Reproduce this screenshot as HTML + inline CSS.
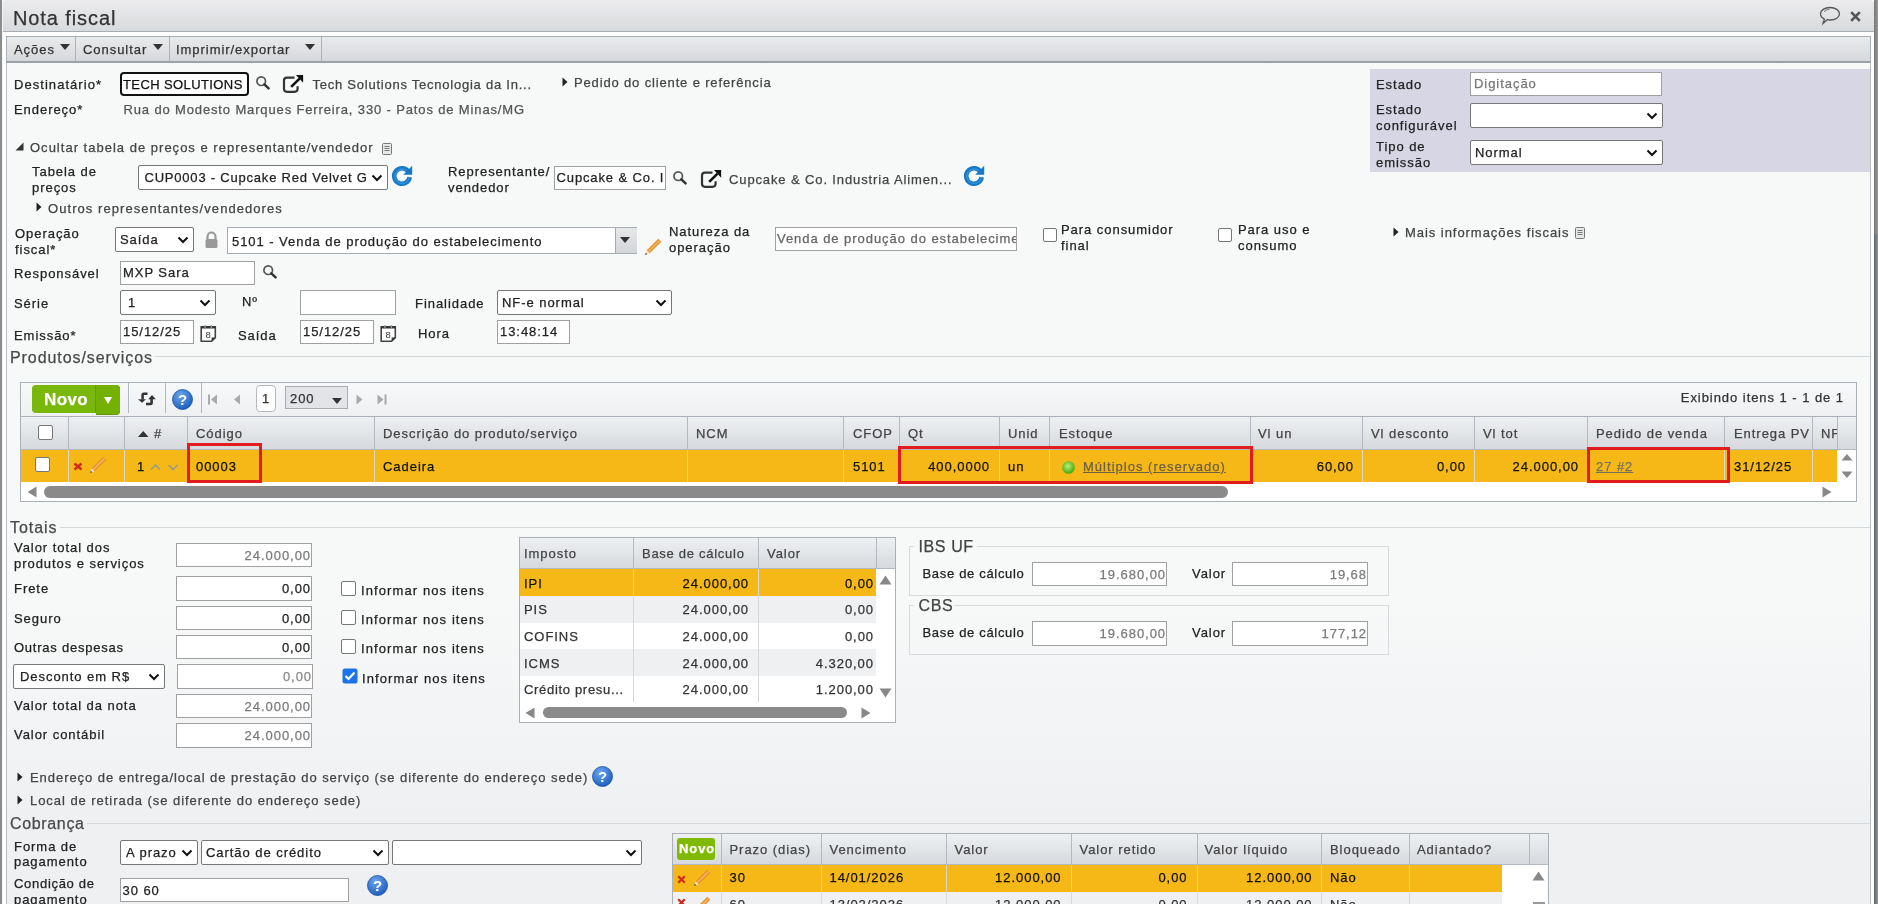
<!DOCTYPE html><html><head><meta charset="utf-8"><style>
html,body{margin:0;padding:0;width:1878px;height:904px;overflow:hidden;background:#f6f7f7;font-family:"Liberation Sans",sans-serif;}
.a{position:absolute;}
.t{position:absolute;white-space:nowrap;-webkit-text-stroke:0.25px currentColor;}
body{will-change:transform}
svg.a{overflow:visible}
</style></head><body>
<div class="a" style="left:0px;top:0px;width:1878px;height:904px;background:#fff;"></div>
<div class="a" style="left:6px;top:63px;width:1865px;height:841px;background:linear-gradient(#f7f8f8 0px,#f7f8f8 540px,#eff0f2 760px,#eff0f2 841px);border-left:1px solid #b8bdc2;border-right:1px solid #b8bdc2;box-sizing:border-box;"></div>
<div class="a" style="left:2px;top:0px;width:1872px;height:32px;background:linear-gradient(#ececee,#d8dadd);border-bottom:1px solid #a7adb4;box-sizing:border-box;border-radius:4px 4px 0 0;"></div>
<div class="a" style="left:0px;top:0px;width:2px;height:904px;background:#8b8d8d;"></div>
<div class="a" style="left:2px;top:2px;width:1px;height:902px;background:#f4f5f6;"></div>
<div class="a" style="left:1874px;top:0px;width:4px;height:234px;background:linear-gradient(90deg,#777,#999);"></div>
<div class="a" style="left:1874px;top:234px;width:4px;height:670px;background:linear-gradient(90deg,#5d666e,#8d969d);"></div>
<div class="t" style="left:13px;top:6.1px;font-size:20px;line-height:24px;color:#333;letter-spacing:0.90px;">Nota fiscal</div>
<svg class="a" style="left:1819px;top:6px" width="22" height="20" viewBox="0 0 22 20"><path d="M11 1.5 C16.5 1.5 20.5 4.3 20.5 7.8 C20.5 11.3 16.5 14 11 14 C10 14 9 13.9 8.2 13.7 L4 17.5 L5.4 13 C3 12 1.5 10 1.5 7.8 C1.5 4.3 5.5 1.5 11 1.5 Z" fill="none" stroke="#555" stroke-width="1.3"/><path d="M5 6 C6 4.5 8 3.5 10.5 3.3" fill="none" stroke="#777" stroke-width="1"/></svg>
<svg class="a" style="left:1850px;top:11px" width="11" height="11" viewBox="0 0 11 11"><path d="M1.2 1.2 L9.8 9.8 M9.8 1.2 L1.2 9.8" stroke="#555" stroke-width="2.6"/></svg>
<div class="a" style="left:6px;top:36px;width:1865px;height:27px;background:linear-gradient(#e9eaec,#d6d8db);border:1px solid #a9afb6;border-bottom:2px solid #9aa1a9;box-sizing:border-box;"></div>
<div class="a" style="left:75px;top:37px;width:1px;height:24px;background:#aeb3b9;"></div>
<div class="a" style="left:169px;top:37px;width:1px;height:24px;background:#aeb3b9;"></div>
<div class="a" style="left:321px;top:37px;width:1px;height:24px;background:#aeb3b9;"></div>
<div class="t" style="left:14px;top:41.5px;font-size:13px;line-height:16px;color:#333;letter-spacing:0.95px;">Ações</div>
<svg class="a" style="left:60px;top:44px" width="11" height="7" viewBox="0 0 11 7"><path d="M0 0 H10 L5 6 Z" fill="#333"/></svg>
<div class="t" style="left:83px;top:41.5px;font-size:13px;line-height:16px;color:#333;letter-spacing:0.95px;">Consultar</div>
<svg class="a" style="left:153px;top:44px" width="11" height="7" viewBox="0 0 11 7"><path d="M0 0 H10 L5 6 Z" fill="#333"/></svg>
<div class="t" style="left:176px;top:41.5px;font-size:13px;line-height:16px;color:#333;letter-spacing:0.95px;">Imprimir/exportar</div>
<svg class="a" style="left:305px;top:44px" width="11" height="7" viewBox="0 0 11 7"><path d="M0 0 H10 L5 6 Z" fill="#333"/></svg>
<div class="t" style="left:14px;top:76.5px;font-size:13px;line-height:16px;color:#222;letter-spacing:1.05px;">Destinatário*</div>
<div class="a" style="left:120px;top:72px;width:129px;height:24px;background:#fff;border:2px solid #111;border-radius:4px;box-sizing:border-box;"></div>
<div class="t" style="left:123px;top:76.5px;font-size:13px;line-height:16px;color:#111;letter-spacing:0.40px;">TECH SOLUTIONS</div>
<svg class="a" style="left:255px;top:75.2px" width="16" height="15" viewBox="0 0 16 15"><circle cx="6.2" cy="6.2" r="4.3" fill="none" stroke="#555" stroke-width="1.7"/><path d="M9.3 9.3 L13.6 13.3" stroke="#333" stroke-width="2.5" stroke-linecap="round"/></svg>
<svg class="a" style="left:282px;top:75px" width="22" height="19" viewBox="0 0 22 19"><path d="M12.5 2.6 H5 Q2 2.6 2 5.6 V13.8 Q2 16.8 5 16.8 H12.5 Q15.6 16.8 15.6 13.8 V11.2" fill="none" stroke="#333" stroke-width="2.2"/><path d="M9.2 11.9 L17.5 3.6" stroke="#111" stroke-width="2.6"/><path d="M14 0.1 H21.1 V7.7 Z" fill="#111"/></svg>
<div class="t" style="left:312.5px;top:76.5px;font-size:13px;line-height:16px;color:#444;letter-spacing:0.76px;">Tech Solutions Tecnologia da In...</div>
<svg class="a" style="left:562px;top:77px" width="6" height="10" viewBox="0 0 6 10"><path d="M0.5 0.5 L5.5 5 L0.5 9.5 Z" fill="#222"/></svg>
<div class="t" style="left:574px;top:74.5px;font-size:13px;line-height:16px;color:#444;letter-spacing:0.85px;">Pedido do cliente e referência</div>
<div class="t" style="left:14px;top:102.0px;font-size:13px;line-height:16px;color:#222;letter-spacing:0.95px;">Endereço*</div>
<div class="t" style="left:123.5px;top:102.0px;font-size:13px;line-height:16px;color:#555;letter-spacing:0.86px;">Rua do Modesto Marques Ferreira, 330 - Patos de Minas/MG</div>
<div class="a" style="left:1370px;top:69px;width:500px;height:103px;background:#d7d6e4;"></div>
<div class="t" style="left:1376px;top:76.5px;font-size:13px;line-height:16px;color:#222;letter-spacing:0.95px;">Estado</div>
<div class="a" style="left:1470px;top:72px;width:192px;height:24px;background:#fff;border:1px solid #a0a0a0;box-sizing:border-box;border-radius:0px;overflow:hidden;"><div class="t" style="left:3px;top:3.0px;font-size:13px;line-height:16px;color:#777;letter-spacing:0.95px">Digitação</div></div>
<div class="t" style="left:1376px;top:101.5px;font-size:13px;line-height:16px;color:#222;letter-spacing:0.95px;">Estado</div>
<div class="t" style="left:1376px;top:117.5px;font-size:13px;line-height:16px;color:#222;letter-spacing:0.95px;">configurável</div>
<div class="a" style="left:1470px;top:103px;width:193px;height:25px;background:#fff;border:1px solid #767676;border-radius:2px;box-sizing:border-box;"></div>
<div class="a" style="left:1646px;top:111.5px;width:12px;height:8px"><svg width="12" height="8" viewBox="0 0 12 8" style="display:block"><path d="M1.5 1.5 L6 6 L10.5 1.5" fill="none" stroke="#111" stroke-width="2"/></svg></div>
<div class="t" style="left:1376px;top:138.5px;font-size:13px;line-height:16px;color:#222;letter-spacing:0.95px;">Tipo de</div>
<div class="t" style="left:1376px;top:154.5px;font-size:13px;line-height:16px;color:#222;letter-spacing:0.95px;">emissão</div>
<div class="a" style="left:1470px;top:140px;width:193px;height:25px;background:#fff;border:1px solid #767676;border-radius:2px;box-sizing:border-box;"></div>
<div class="t" style="left:1475px;top:145.3px;font-size:13px;line-height:16px;color:#222;letter-spacing:0.95px;width:172px;overflow:hidden;">Normal</div>
<div class="a" style="left:1646px;top:148.5px;width:12px;height:8px"><svg width="12" height="8" viewBox="0 0 12 8" style="display:block"><path d="M1.5 1.5 L6 6 L10.5 1.5" fill="none" stroke="#111" stroke-width="2"/></svg></div>
<svg class="a" style="left:15px;top:142px" width="9" height="9" viewBox="0 0 9 9"><path d="M8.5 0.5 L8.5 8.5 L0.5 8.5 Z" fill="#333"/></svg>
<div class="t" style="left:30px;top:139.5px;font-size:13px;line-height:16px;color:#444;letter-spacing:1.01px;">Ocultar tabela de preços e representante/vendedor</div>
<svg class="a" style="left:382px;top:143px" width="10" height="12" viewBox="0 0 10 12"><rect x="0.5" y="0.5" width="9" height="11" rx="1" fill="#e8e8e8" stroke="#777"/><path d="M2.5 3.5 H7.5 M2.5 5.5 H7.5 M2.5 7.5 H7.5" stroke="#777"/></svg>
<div class="t" style="left:32px;top:163.5px;font-size:13px;line-height:16px;color:#222;letter-spacing:0.95px;">Tabela de</div>
<div class="t" style="left:32px;top:179.5px;font-size:13px;line-height:16px;color:#222;letter-spacing:0.95px;">preços</div>
<div class="a" style="left:138px;top:165px;width:250px;height:25px;background:#fff;border:1px solid #767676;border-radius:2px;box-sizing:border-box;"></div>
<div class="t" style="left:144.5px;top:170.3px;font-size:13px;line-height:16px;color:#222;letter-spacing:0.79px;width:227.5px;overflow:hidden;">CUP0003 - Cupcake Red Velvet G</div>
<div class="a" style="left:371px;top:173.5px;width:12px;height:8px"><svg width="12" height="8" viewBox="0 0 12 8" style="display:block"><path d="M1.5 1.5 L6 6 L10.5 1.5" fill="none" stroke="#111" stroke-width="2"/></svg></div>
<svg class="a" style="left:392px;top:166px" width="21" height="21" viewBox="0 0 21 21"><path d="M17.67 11.08 A7.75 7.75 0 1 1 16.4 5.6" fill="none" stroke="#1479c9" stroke-width="4.6"/><path d="M17.3 11.0 A7.2 7.2 0 1 1 14.6 4.6" fill="none" stroke="#4aa3e6" stroke-width="1.4" opacity="0.6"/><path d="M20.2 -0.2 L20.2 8.7 L11.3 8.7 Z" fill="#1479c9"/></svg>
<div class="t" style="left:448px;top:163.5px;font-size:13px;line-height:16px;color:#222;letter-spacing:0.95px;">Representante/</div>
<div class="t" style="left:448px;top:179.5px;font-size:13px;line-height:16px;color:#222;letter-spacing:0.95px;">vendedor</div>
<div class="a" style="left:554px;top:166px;width:112px;height:24px;background:#fff;border:1px solid #a0a0a0;box-sizing:border-box;border-radius:0px;overflow:hidden;"><div class="t" style="left:1.5px;top:3.0px;font-size:13px;line-height:16px;color:#222;letter-spacing:0.88px">Cupcake &amp; Co. Industria</div></div>
<svg class="a" style="left:672px;top:170.2px" width="16" height="15" viewBox="0 0 16 15"><circle cx="6.2" cy="6.2" r="4.3" fill="none" stroke="#555" stroke-width="1.7"/><path d="M9.3 9.3 L13.6 13.3" stroke="#333" stroke-width="2.5" stroke-linecap="round"/></svg>
<svg class="a" style="left:700px;top:170px" width="22" height="19" viewBox="0 0 22 19"><path d="M12.5 2.6 H5 Q2 2.6 2 5.6 V13.8 Q2 16.8 5 16.8 H12.5 Q15.6 16.8 15.6 13.8 V11.2" fill="none" stroke="#333" stroke-width="2.2"/><path d="M9.2 11.9 L17.5 3.6" stroke="#111" stroke-width="2.6"/><path d="M14 0.1 H21.1 V7.7 Z" fill="#111"/></svg>
<div class="t" style="left:729px;top:171.5px;font-size:13px;line-height:16px;color:#444;letter-spacing:0.88px;">Cupcake &amp; Co. Industria Alimen...</div>
<svg class="a" style="left:964px;top:166px" width="21" height="21" viewBox="0 0 21 21"><path d="M17.67 11.08 A7.75 7.75 0 1 1 16.4 5.6" fill="none" stroke="#1479c9" stroke-width="4.6"/><path d="M17.3 11.0 A7.2 7.2 0 1 1 14.6 4.6" fill="none" stroke="#4aa3e6" stroke-width="1.4" opacity="0.6"/><path d="M20.2 -0.2 L20.2 8.7 L11.3 8.7 Z" fill="#1479c9"/></svg>
<svg class="a" style="left:36px;top:202px" width="6" height="10" viewBox="0 0 6 10"><path d="M0.5 0.5 L5.5 5 L0.5 9.5 Z" fill="#222"/></svg>
<div class="t" style="left:48px;top:200.5px;font-size:13px;line-height:16px;color:#444;letter-spacing:1.06px;">Outros representantes/vendedores</div>
<div class="t" style="left:15px;top:225.5px;font-size:13px;line-height:16px;color:#222;letter-spacing:0.95px;">Operação</div>
<div class="t" style="left:15px;top:241.5px;font-size:13px;line-height:16px;color:#222;letter-spacing:0.95px;">fiscal*</div>
<div class="a" style="left:115px;top:227px;width:79px;height:25px;background:#fff;border:1px solid #767676;border-radius:2px;box-sizing:border-box;"></div>
<div class="t" style="left:120px;top:232.3px;font-size:13px;line-height:16px;color:#222;letter-spacing:0.95px;width:58px;overflow:hidden;">Saída</div>
<div class="a" style="left:177px;top:235.5px;width:12px;height:8px"><svg width="12" height="8" viewBox="0 0 12 8" style="display:block"><path d="M1.5 1.5 L6 6 L10.5 1.5" fill="none" stroke="#111" stroke-width="2"/></svg></div>
<svg class="a" style="left:204px;top:231px" width="15" height="18" viewBox="0 0 15 18"><path d="M3.5 8 V5.5 A4 4 0 0 1 11.5 5.5 V8" fill="none" stroke="#999" stroke-width="2.2"/><rect x="1.5" y="8" width="12" height="9" rx="1.5" fill="#999"/></svg>
<div class="a" style="left:227px;top:227px;width:410px;height:27px;background:#fff;border:1px solid #a5adb6;box-sizing:border-box;"></div>
<div class="a" style="left:615px;top:228px;width:21px;height:25px;background:linear-gradient(#e6e7e9,#d3d5d8);border-left:1px solid #aaa;"></div>
<svg class="a" style="left:620px;top:237px" width="11" height="7" viewBox="0 0 11 7"><path d="M0 0 H10 L5 6 Z" fill="#333"/></svg>
<div class="t" style="left:232px;top:233.5px;font-size:13px;line-height:16px;color:#222;letter-spacing:0.95px;">5101 - Venda de produção do estabelecimento</div>
<svg class="a" style="left:644px;top:238px" width="18" height="18" viewBox="0 0 18 18"><path d="M4.2 13.8 L15.8 2.2" stroke="#e8902a" stroke-width="4.2" stroke-linecap="butt"/><path d="M4.2 13.8 L15.8 2.2" stroke="#f7b868" stroke-width="1.4"/><path d="M1.2 16.8 L2.6 12.3 L5.7 15.4 Z" fill="#f5e3c0"/><path d="M1.2 16.8 L1.8 14.8 L3.2 16.2 Z" fill="#222"/></svg>
<div class="t" style="left:669px;top:223.5px;font-size:13px;line-height:16px;color:#222;letter-spacing:0.95px;">Natureza da</div>
<div class="t" style="left:669px;top:239.5px;font-size:13px;line-height:16px;color:#222;letter-spacing:0.95px;">operação</div>
<div class="a" style="left:775px;top:227px;width:242px;height:24px;background:#fff;border:1px solid #a0a0a0;box-sizing:border-box;border-radius:0px;overflow:hidden;"><div class="t" style="left:1px;top:3.0px;font-size:13px;line-height:16px;color:#666;letter-spacing:0.95px">Venda de produção do estabelecimento</div></div>
<div class="a" style="left:1043px;top:228px;width:12px;height:12px;border:1px solid #767676;border-radius:2px;background:#fff"></div>
<div class="t" style="left:1061px;top:221.5px;font-size:13px;line-height:16px;color:#222;letter-spacing:0.95px;">Para consumidor</div>
<div class="t" style="left:1061px;top:237.5px;font-size:13px;line-height:16px;color:#222;letter-spacing:0.95px;">final</div>
<div class="a" style="left:1218px;top:228px;width:12px;height:12px;border:1px solid #767676;border-radius:2px;background:#fff"></div>
<div class="t" style="left:1238px;top:221.5px;font-size:13px;line-height:16px;color:#222;letter-spacing:0.95px;">Para uso e</div>
<div class="t" style="left:1238px;top:237.5px;font-size:13px;line-height:16px;color:#222;letter-spacing:0.95px;">consumo</div>
<svg class="a" style="left:1393px;top:227px" width="6" height="10" viewBox="0 0 6 10"><path d="M0.5 0.5 L5.5 5 L0.5 9.5 Z" fill="#222"/></svg>
<div class="t" style="left:1405px;top:224.5px;font-size:13px;line-height:16px;color:#444;letter-spacing:0.95px;">Mais informações fiscais</div>
<svg class="a" style="left:1575px;top:227px" width="10" height="12" viewBox="0 0 10 12"><rect x="0.5" y="0.5" width="9" height="11" rx="1" fill="#e8e8e8" stroke="#777"/><path d="M2.5 3.5 H7.5 M2.5 5.5 H7.5 M2.5 7.5 H7.5" stroke="#777"/></svg>
<div class="t" style="left:14px;top:265.5px;font-size:13px;line-height:16px;color:#222;letter-spacing:0.95px;">Responsável</div>
<div class="a" style="left:120px;top:261px;width:135px;height:24px;background:#fff;border:1px solid #a0a0a0;box-sizing:border-box;border-radius:0px;overflow:hidden;"><div class="t" style="left:2px;top:3.0px;font-size:13px;line-height:16px;color:#222;letter-spacing:0.95px">MXP Sara</div></div>
<svg class="a" style="left:262px;top:264.2px" width="16" height="15" viewBox="0 0 16 15"><circle cx="6.2" cy="6.2" r="4.3" fill="none" stroke="#555" stroke-width="1.7"/><path d="M9.3 9.3 L13.6 13.3" stroke="#333" stroke-width="2.5" stroke-linecap="round"/></svg>
<div class="t" style="left:14px;top:295.5px;font-size:13px;line-height:16px;color:#222;letter-spacing:0.95px;">Série</div>
<div class="a" style="left:120px;top:290px;width:96px;height:25px;background:#fff;border:1px solid #767676;border-radius:2px;box-sizing:border-box;"></div>
<div class="t" style="left:128px;top:295.3px;font-size:13px;line-height:16px;color:#222;letter-spacing:0.95px;width:72px;overflow:hidden;">1</div>
<div class="a" style="left:199px;top:298.5px;width:12px;height:8px"><svg width="12" height="8" viewBox="0 0 12 8" style="display:block"><path d="M1.5 1.5 L6 6 L10.5 1.5" fill="none" stroke="#111" stroke-width="2"/></svg></div>
<div class="t" style="left:242px;top:293.5px;font-size:13px;line-height:16px;color:#222;letter-spacing:0.95px;">Nº</div>
<div class="a" style="left:300px;top:290px;width:96px;height:25px;background:#fff;border:1px solid #a0a0a0;box-sizing:border-box;border-radius:0px;overflow:hidden;"></div>
<div class="t" style="left:415px;top:295.5px;font-size:13px;line-height:16px;color:#222;letter-spacing:0.95px;">Finalidade</div>
<div class="a" style="left:497px;top:290px;width:175px;height:25px;background:#fff;border:1px solid #767676;border-radius:2px;box-sizing:border-box;"></div>
<div class="t" style="left:502px;top:295.3px;font-size:13px;line-height:16px;color:#222;letter-spacing:0.95px;width:154px;overflow:hidden;">NF-e normal</div>
<div class="a" style="left:655px;top:298.5px;width:12px;height:8px"><svg width="12" height="8" viewBox="0 0 12 8" style="display:block"><path d="M1.5 1.5 L6 6 L10.5 1.5" fill="none" stroke="#111" stroke-width="2"/></svg></div>
<div class="t" style="left:14px;top:327.5px;font-size:13px;line-height:16px;color:#222;letter-spacing:0.95px;">Emissão*</div>
<div class="a" style="left:120px;top:320px;width:74px;height:24px;background:#fff;border:1px solid #a0a0a0;box-sizing:border-box;border-radius:0px;overflow:hidden;"><div class="t" style="left:2px;top:3.0px;font-size:13px;line-height:16px;color:#222;letter-spacing:0.95px">15/12/25</div></div>
<svg class="a" style="left:200px;top:325px" width="17" height="17" viewBox="0 0 17 17"><path d="M1.2 1.8 H15.3 V12.6 L11.6 16.3 H1.2 Z" fill="#fff" stroke="#444" stroke-width="1.6"/><path d="M1.2 2.4 H15.3" stroke="#333" stroke-width="2.2"/><path d="M5 0 V3 M11.4 0 V3" stroke="#999" stroke-width="1.3"/><path d="M15.3 12.6 L11.6 12.6 L11.6 16.3 Z" fill="#333"/><text x="8.1" y="12.8" text-anchor="middle" font-family="Liberation Sans" font-size="9.5" fill="#333">8</text></svg>
<div class="t" style="left:238px;top:327.5px;font-size:13px;line-height:16px;color:#222;letter-spacing:0.95px;">Saída</div>
<div class="a" style="left:300px;top:320px;width:74px;height:24px;background:#fff;border:1px solid #a0a0a0;box-sizing:border-box;border-radius:0px;overflow:hidden;"><div class="t" style="left:2px;top:3.0px;font-size:13px;line-height:16px;color:#222;letter-spacing:0.95px">15/12/25</div></div>
<svg class="a" style="left:380px;top:325px" width="17" height="17" viewBox="0 0 17 17"><path d="M1.2 1.8 H15.3 V12.6 L11.6 16.3 H1.2 Z" fill="#fff" stroke="#444" stroke-width="1.6"/><path d="M1.2 2.4 H15.3" stroke="#333" stroke-width="2.2"/><path d="M5 0 V3 M11.4 0 V3" stroke="#999" stroke-width="1.3"/><path d="M15.3 12.6 L11.6 12.6 L11.6 16.3 Z" fill="#333"/><text x="8.1" y="12.8" text-anchor="middle" font-family="Liberation Sans" font-size="9.5" fill="#333">8</text></svg>
<div class="t" style="left:418px;top:325.5px;font-size:13px;line-height:16px;color:#222;letter-spacing:0.95px;">Hora</div>
<div class="a" style="left:497px;top:320px;width:73px;height:24px;background:#fff;border:1px solid #a0a0a0;box-sizing:border-box;border-radius:0px;overflow:hidden;"><div class="t" style="left:2px;top:3.0px;font-size:13px;line-height:16px;color:#222;letter-spacing:0.95px">13:48:14</div></div>
<div class="t" style="left:10px;top:347.5px;font-size:16px;line-height:20px;color:#4a4a4a;letter-spacing:0.93px;">Produtos/serviços</div>
<div class="a" style="left:155px;top:356px;width:1715px;height:1px;background:#d5d8db;"></div>
<div class="a" style="left:20px;top:382px;width:1837px;height:120px;background:#fff;border:1px solid #a9b0b8;box-sizing:border-box;"></div>
<div class="a" style="left:21px;top:383px;width:1835px;height:33px;background:linear-gradient(#f7f8f9,#eef0f1);"></div>
<div class="a" style="left:21px;top:416px;width:1835px;height:1px;background:#a9b0b8;"></div>
<div class="a" style="left:32px;top:385px;width:88px;height:28px;background:#79b70a;border-radius:4px;"></div>
<div class="a" style="left:95px;top:385px;width:1px;height:28px;background:#5e9a00;"></div>
<div class="a" style="left:96px;top:385px;width:24px;height:29px;background:#74b000;border-radius:0 4px 4px 0;box-shadow:0 1px 0 #5e9600;"></div>
<div class="t" style="left:44px;top:390.1px;font-size:17px;line-height:20px;color:#fff;letter-spacing:0.40px;font-weight:bold;">Novo</div>
<svg class="a" style="left:103px;top:396px" width="10" height="9" viewBox="0 0 10 9"><path d="M1 1 H9 L5 8 Z" fill="#fff"/></svg>
<div class="a" style="left:128px;top:383px;width:1px;height:30px;background:#b3b9c0;"></div>
<div class="a" style="left:165px;top:383px;width:1px;height:30px;background:#b3b9c0;"></div>
<div class="a" style="left:201px;top:383px;width:1px;height:30px;background:#b3b9c0;"></div>
<svg class="a" style="left:137px;top:391px" width="20" height="15" viewBox="0 0 20 15"><path d="M10.5 2.7 H6.8 Q5.6 2.7 5.6 4 V8.6" fill="none" stroke="#333" stroke-width="2.5"/><path d="M1 8.2 H9 L5 11.8 Z" fill="#333"/><path d="M9 13 H13.4 Q14.6 13 14.6 11.8 V7.5" fill="none" stroke="#333" stroke-width="2.6"/><path d="M11.2 8.2 H18.8 L15 4 Z" fill="#333"/></svg>
<svg class="a" style="left:172px;top:389px" width="21" height="21" viewBox="0 0 21 21"><defs><radialGradient id="hg172389" cx="40%" cy="30%" r="70%"><stop offset="0" stop-color="#6aa7ee"/><stop offset="1" stop-color="#1d5fc1"/></radialGradient></defs><circle cx="10.5" cy="10.5" r="10" fill="url(#hg172389)" stroke="#1a4fa0" stroke-width="0.8"/><text x="10.5" y="16" text-anchor="middle" font-family="Liberation Sans" font-weight="bold" font-size="15" fill="#fff">?</text></svg>
<svg class="a" style="left:208px;top:394px" width="10" height="11" viewBox="0 0 10 11"><rect x="0" y="0.5" width="2" height="10" fill="#aaa"/><path d="M9 0.5 V10.5 L3 5.5 Z" fill="#aaa"/></svg>
<svg class="a" style="left:233px;top:394px" width="8" height="11" viewBox="0 0 8 11"><path d="M7 0.5 V10.5 L1 5.5 Z" fill="#aaa"/></svg>
<div class="a" style="left:256px;top:385px;width:20px;height:27px;background:#fff;border:1px solid #b5b9be;border-radius:4px;box-sizing:border-box;"></div>
<div class="t" style="left:262px;top:390.5px;font-size:13px;line-height:16px;color:#333;letter-spacing:0.95px;">1</div>
<div class="a" style="left:285px;top:386px;width:63px;height:23px;background:#e3e4e7;border:1px solid #a9adb2;box-sizing:border-box;"></div>
<div class="t" style="left:290px;top:390.5px;font-size:13px;line-height:16px;color:#333;letter-spacing:0.95px;">200</div>
<svg class="a" style="left:332px;top:398px" width="10" height="6" viewBox="0 0 10 6"><path d="M0 0 H10 L5 6 Z" fill="#333"/></svg>
<svg class="a" style="left:356px;top:394px" width="8" height="11" viewBox="0 0 8 11"><path d="M0.5 0.5 V10.5 L6.5 5.5 Z" fill="#aaa"/></svg>
<svg class="a" style="left:377px;top:394px" width="10" height="11" viewBox="0 0 10 11"><path d="M0.5 0.5 V10.5 L6.5 5.5 Z" fill="#aaa"/><rect x="7.5" y="0.5" width="2" height="10" fill="#aaa"/></svg>
<div class="t" style="right:34px;top:389.5px;font-size:13px;line-height:16px;color:#333;letter-spacing:0.95px;">Exibindo itens 1 - 1 de 1</div>
<div class="a" style="left:21px;top:417px;width:1835px;height:32px;background:linear-gradient(#eef0f2,#d6d9dd);"></div>
<div class="a" style="left:21px;top:449px;width:1835px;height:1px;background:#b3b9c0;"></div>
<div class="a" style="left:68px;top:417px;width:1px;height:32px;background:#b3b9c0;"></div>
<div class="a" style="left:124px;top:417px;width:1px;height:32px;background:#b3b9c0;"></div>
<div class="a" style="left:187px;top:417px;width:1px;height:32px;background:#b3b9c0;"></div>
<div class="a" style="left:374px;top:417px;width:1px;height:32px;background:#b3b9c0;"></div>
<div class="a" style="left:687px;top:417px;width:1px;height:32px;background:#b3b9c0;"></div>
<div class="a" style="left:843px;top:417px;width:1px;height:32px;background:#b3b9c0;"></div>
<div class="a" style="left:899px;top:417px;width:1px;height:32px;background:#b3b9c0;"></div>
<div class="a" style="left:999px;top:417px;width:1px;height:32px;background:#b3b9c0;"></div>
<div class="a" style="left:1049px;top:417px;width:1px;height:32px;background:#b3b9c0;"></div>
<div class="a" style="left:1250px;top:417px;width:1px;height:32px;background:#b3b9c0;"></div>
<div class="a" style="left:1362px;top:417px;width:1px;height:32px;background:#b3b9c0;"></div>
<div class="a" style="left:1474px;top:417px;width:1px;height:32px;background:#b3b9c0;"></div>
<div class="a" style="left:1587px;top:417px;width:1px;height:32px;background:#b3b9c0;"></div>
<div class="a" style="left:1724px;top:417px;width:1px;height:32px;background:#b3b9c0;"></div>
<div class="a" style="left:1812px;top:417px;width:1px;height:32px;background:#b3b9c0;"></div>
<div class="a" style="left:1837px;top:417px;width:1px;height:32px;background:#b3b9c0;"></div>
<div class="a" style="left:21px;top:450px;width:1816px;height:32px;background:#f5b817;"></div>
<div class="a" style="left:68px;top:450px;width:1px;height:32px;background:#ddd6c2;"></div>
<div class="a" style="left:124px;top:450px;width:1px;height:32px;background:#ddd6c2;"></div>
<div class="a" style="left:187px;top:450px;width:1px;height:32px;background:#ddd6c2;"></div>
<div class="a" style="left:374px;top:450px;width:1px;height:32px;background:#ddd6c2;"></div>
<div class="a" style="left:687px;top:450px;width:1px;height:32px;background:#ddd6c2;"></div>
<div class="a" style="left:843px;top:450px;width:1px;height:32px;background:#ddd6c2;"></div>
<div class="a" style="left:899px;top:450px;width:1px;height:32px;background:#ddd6c2;"></div>
<div class="a" style="left:999px;top:450px;width:1px;height:32px;background:#ddd6c2;"></div>
<div class="a" style="left:1049px;top:450px;width:1px;height:32px;background:#ddd6c2;"></div>
<div class="a" style="left:1250px;top:450px;width:1px;height:32px;background:#ddd6c2;"></div>
<div class="a" style="left:1362px;top:450px;width:1px;height:32px;background:#ddd6c2;"></div>
<div class="a" style="left:1474px;top:450px;width:1px;height:32px;background:#ddd6c2;"></div>
<div class="a" style="left:1587px;top:450px;width:1px;height:32px;background:#ddd6c2;"></div>
<div class="a" style="left:1724px;top:450px;width:1px;height:32px;background:#ddd6c2;"></div>
<div class="a" style="left:1812px;top:450px;width:1px;height:32px;background:#ddd6c2;"></div>
<div class="a" style="left:38px;top:425px;width:13px;height:13px;border:1px solid #767676;border-radius:2px;background:#fff"></div>
<svg class="a" style="left:138px;top:431px" width="11" height="6" viewBox="0 0 11 6"><path d="M0 6 H10.5 L5.25 0 Z" fill="#333"/></svg>
<div class="t" style="left:154px;top:425.5px;font-size:13px;line-height:16px;color:#444;letter-spacing:0.95px;">#</div>
<div class="t" style="left:196px;top:425.5px;font-size:13px;line-height:16px;color:#444;letter-spacing:0.95px;">Código</div>
<div class="t" style="left:383px;top:425.5px;font-size:13px;line-height:16px;color:#444;letter-spacing:0.95px;">Descrição do produto/serviço</div>
<div class="t" style="left:696px;top:425.5px;font-size:13px;line-height:16px;color:#444;letter-spacing:0.95px;">NCM</div>
<div class="t" style="left:853px;top:425.5px;font-size:13px;line-height:16px;color:#444;letter-spacing:0.95px;">CFOP</div>
<div class="t" style="left:908px;top:425.5px;font-size:13px;line-height:16px;color:#444;letter-spacing:0.95px;">Qt</div>
<div class="t" style="left:1008px;top:425.5px;font-size:13px;line-height:16px;color:#444;letter-spacing:0.95px;">Unid</div>
<div class="t" style="left:1059px;top:425.5px;font-size:13px;line-height:16px;color:#444;letter-spacing:0.95px;">Estoque</div>
<div class="t" style="left:1258px;top:425.5px;font-size:13px;line-height:16px;color:#444;letter-spacing:0.95px;">Vl un</div>
<div class="t" style="left:1371px;top:425.5px;font-size:13px;line-height:16px;color:#444;letter-spacing:0.95px;">Vl desconto</div>
<div class="t" style="left:1483px;top:425.5px;font-size:13px;line-height:16px;color:#444;letter-spacing:0.95px;">Vl tot</div>
<div class="t" style="left:1596px;top:425.5px;font-size:13px;line-height:16px;color:#444;letter-spacing:0.95px;">Pedido de venda</div>
<div class="t" style="left:1734px;top:425.5px;font-size:13px;line-height:16px;color:#444;letter-spacing:0.95px;">Entrega PV</div>
<div class="a" style="left:1813px;top:417px;width:24px;height:32px;overflow:hidden"><div class="t" style="left:8px;top:9.3px;font-size:13px;line-height:16px;color:#444;letter-spacing:0.95px">NF</div></div>
<div class="a" style="left:35px;top:457px;width:13px;height:13px;border:1px solid #767676;border-radius:2px;background:#fff"></div>
<svg class="a" style="left:73px;top:462px" width="10" height="9" viewBox="0 0 10 9"><path d="M1.5 1.5 L8.5 7.5 M8.5 1.5 L1.5 7.5" stroke="#d02a1a" stroke-width="2.4"/></svg>
<svg class="a" style="left:89px;top:456px" width="18" height="18" viewBox="0 0 18 18"><path d="M4.2 13.8 L15.8 2.2" stroke="#e8902a" stroke-width="4.2" stroke-linecap="butt"/><path d="M4.2 13.8 L15.8 2.2" stroke="#f7b868" stroke-width="1.4"/><path d="M1.2 16.8 L2.6 12.3 L5.7 15.4 Z" fill="#f5e3c0"/><path d="M1.2 16.8 L1.8 14.8 L3.2 16.2 Z" fill="#222"/></svg>
<div class="t" style="left:137px;top:458.5px;font-size:13px;line-height:16px;color:#111;letter-spacing:0.95px;">1</div>
<svg class="a" style="left:150px;top:463px" width="30" height="8" viewBox="0 0 30 8"><path d="M1 6.5 L5.5 2 L10 6.5" fill="none" stroke="#9c9a88" stroke-width="1.7"/><path d="M18.5 2 L23 6.5 L27.5 2" fill="none" stroke="#9c9a88" stroke-width="1.7"/></svg>
<div class="t" style="left:196px;top:458.5px;font-size:13px;line-height:16px;color:#111;letter-spacing:0.95px;">00003</div>
<div class="t" style="left:383px;top:458.5px;font-size:13px;line-height:16px;color:#111;letter-spacing:0.95px;">Cadeira</div>
<div class="t" style="left:853px;top:458.5px;font-size:13px;line-height:16px;color:#111;letter-spacing:0.95px;">5101</div>
<div class="t" style="right:888px;top:458.5px;font-size:13px;line-height:16px;color:#111;letter-spacing:0.95px;">400,0000</div>
<div class="t" style="left:1008px;top:458.5px;font-size:13px;line-height:16px;color:#111;letter-spacing:0.95px;">un</div>
<svg class="a" style="left:1062px;top:461px" width="13" height="13" viewBox="0 0 13 13"><defs><radialGradient id="gd" cx="45%" cy="40%" r="60%"><stop offset="0" stop-color="#b8f070"/><stop offset="1" stop-color="#3faa10"/></radialGradient></defs><circle cx="6.5" cy="6.5" r="6.3" fill="url(#gd)"/></svg>
<div class="t" style="left:1083px;top:458.5px;font-size:13px;line-height:16px;color:#6f6140;letter-spacing:0.95px;text-decoration:underline;letter-spacing:1.02px;">Múltiplos (reservado)</div>
<div class="t" style="right:524px;top:458.5px;font-size:13px;line-height:16px;color:#111;letter-spacing:0.95px;">60,00</div>
<div class="t" style="right:412px;top:458.5px;font-size:13px;line-height:16px;color:#111;letter-spacing:0.95px;">0,00</div>
<div class="t" style="right:299px;top:458.5px;font-size:13px;line-height:16px;color:#111;letter-spacing:0.95px;">24.000,00</div>
<div class="t" style="left:1596px;top:458.5px;font-size:13px;line-height:16px;color:#757060;letter-spacing:0.95px;text-decoration:underline;">27 #2</div>
<div class="t" style="left:1734px;top:458.5px;font-size:13px;line-height:16px;color:#111;letter-spacing:0.95px;">31/12/25</div>
<svg class="a" style="left:1841px;top:453px" width="12" height="8" viewBox="0 0 12 8"><path d="M0.5 7.5 H11.5 L6 1 Z" fill="#888"/></svg>
<svg class="a" style="left:1841px;top:471px" width="12" height="8" viewBox="0 0 12 8"><path d="M0.5 0.5 H11.5 L6 7 Z" fill="#888"/></svg>
<svg class="a" style="left:27px;top:486px" width="10" height="12" viewBox="0 0 10 12"><path d="M9.5 0.5 V11.5 L0.5 6 Z" fill="#888"/></svg>
<div class="a" style="left:44px;top:486px;width:1184px;height:12px;background:#8a8a8a;border-radius:6px;"></div>
<svg class="a" style="left:1822px;top:486px" width="10" height="12" viewBox="0 0 10 12"><path d="M0.5 0.5 V11.5 L9.5 6 Z" fill="#888"/></svg>
<div class="a" style="left:187px;top:443px;width:75px;height:40px;border:3px solid #e11c1c;box-sizing:border-box;"></div>
<div class="a" style="left:898px;top:446px;width:355px;height:38px;border:3px solid #e11c1c;box-sizing:border-box;"></div>
<div class="a" style="left:1587px;top:447px;width:143px;height:36px;border:3px solid #e11c1c;box-sizing:border-box;"></div>
<div class="t" style="left:10px;top:518.0px;font-size:16px;line-height:20px;color:#4a4a4a;letter-spacing:0.93px;">Totais</div>
<div class="a" style="left:60px;top:527px;width:1810px;height:1px;background:#d5d8db;"></div>
<div class="t" style="left:14px;top:539.5px;font-size:13px;line-height:16px;color:#222;letter-spacing:0.95px;">Valor total dos</div>
<div class="t" style="left:14px;top:555.5px;font-size:13px;line-height:16px;color:#222;letter-spacing:0.95px;">produtos e serviços</div>
<div class="a" style="left:176px;top:543px;width:136px;height:24px;background:#fff;border:1px solid #a0a0a0;box-sizing:border-box;"></div>
<div class="t" style="right:1567px;top:547.5px;font-size:13px;line-height:16px;color:#7a7a7a;letter-spacing:0.95px;">24.000,00</div>
<div class="t" style="left:14px;top:580.5px;font-size:13px;line-height:16px;color:#222;letter-spacing:0.95px;">Frete</div>
<div class="a" style="left:176px;top:576px;width:136px;height:25px;background:#fff;border:1px solid #a0a0a0;box-sizing:border-box;"></div>
<div class="t" style="right:1567px;top:581.0px;font-size:13px;line-height:16px;color:#222;letter-spacing:0.95px;">0,00</div>
<div class="a" style="left:341px;top:581px;width:13px;height:13px;border:1px solid #767676;border-radius:2px;background:#fff"></div>
<div class="t" style="left:361px;top:583.0px;font-size:13px;line-height:16px;color:#222;letter-spacing:1.10px;">Informar nos itens</div>
<div class="t" style="left:14px;top:610.5px;font-size:13px;line-height:16px;color:#222;letter-spacing:0.95px;">Seguro</div>
<div class="a" style="left:176px;top:606px;width:136px;height:24px;background:#fff;border:1px solid #a0a0a0;box-sizing:border-box;"></div>
<div class="t" style="right:1567px;top:610.5px;font-size:13px;line-height:16px;color:#222;letter-spacing:0.95px;">0,00</div>
<div class="a" style="left:341px;top:610px;width:13px;height:13px;border:1px solid #767676;border-radius:2px;background:#fff"></div>
<div class="t" style="left:361px;top:612.0px;font-size:13px;line-height:16px;color:#222;letter-spacing:1.10px;">Informar nos itens</div>
<div class="t" style="left:14px;top:639.5px;font-size:13px;line-height:16px;color:#222;letter-spacing:0.76px;">Outras despesas</div>
<div class="a" style="left:176px;top:635px;width:136px;height:24px;background:#fff;border:1px solid #a0a0a0;box-sizing:border-box;"></div>
<div class="t" style="right:1567px;top:639.5px;font-size:13px;line-height:16px;color:#222;letter-spacing:0.95px;">0,00</div>
<div class="a" style="left:341px;top:639px;width:13px;height:13px;border:1px solid #767676;border-radius:2px;background:#fff"></div>
<div class="t" style="left:361px;top:641.0px;font-size:13px;line-height:16px;color:#222;letter-spacing:1.10px;">Informar nos itens</div>
<div class="a" style="left:13px;top:664px;width:152px;height:25px;background:#fff;border:1px solid #767676;border-radius:2px;box-sizing:border-box;"></div>
<div class="t" style="left:20px;top:669.3px;font-size:13px;line-height:16px;color:#222;letter-spacing:0.95px;width:129px;overflow:hidden;">Desconto em R$</div>
<div class="a" style="left:148px;top:672.5px;width:12px;height:8px"><svg width="12" height="8" viewBox="0 0 12 8" style="display:block"><path d="M1.5 1.5 L6 6 L10.5 1.5" fill="none" stroke="#111" stroke-width="2"/></svg></div>
<div class="a" style="left:177px;top:664px;width:136px;height:25px;background:#fff;border:1px solid #a0a0a0;box-sizing:border-box;"></div>
<div class="t" style="right:1566px;top:669.0px;font-size:13px;line-height:16px;color:#8a8a8a;letter-spacing:0.95px;">0,00</div>
<svg class="a" style="left:342px;top:668px" width="16" height="16" viewBox="0 0 16 16"><rect x="0.5" y="0.5" width="15" height="15" rx="2.5" fill="#1a73e8"/><path d="M3.5 8 L6.5 11 L12.5 4.5" fill="none" stroke="#fff" stroke-width="2.2"/></svg>
<div class="t" style="left:362px;top:670.5px;font-size:13px;line-height:16px;color:#222;letter-spacing:1.10px;">Informar nos itens</div>
<div class="t" style="left:14px;top:698.0px;font-size:13px;line-height:16px;color:#222;letter-spacing:0.95px;">Valor total da nota</div>
<div class="a" style="left:176px;top:694px;width:136px;height:24px;background:#fff;border:1px solid #a0a0a0;box-sizing:border-box;"></div>
<div class="t" style="right:1567px;top:698.5px;font-size:13px;line-height:16px;color:#7a7a7a;letter-spacing:0.95px;">24.000,00</div>
<div class="t" style="left:14px;top:727.0px;font-size:13px;line-height:16px;color:#222;letter-spacing:0.95px;">Valor contábil</div>
<div class="a" style="left:176px;top:723px;width:136px;height:25px;background:#fff;border:1px solid #a0a0a0;box-sizing:border-box;"></div>
<div class="t" style="right:1567px;top:728.0px;font-size:13px;line-height:16px;color:#7a7a7a;letter-spacing:0.95px;">24.000,00</div>
<div class="a" style="left:519px;top:537px;width:377px;height:186px;background:#fff;border:1px solid #a9b0b8;box-sizing:border-box;"></div>
<div class="a" style="left:520px;top:538px;width:375px;height:30px;background:linear-gradient(#eef0f2,#d6d9dd);"></div>
<div class="a" style="left:520px;top:568px;width:375px;height:1px;background:#b3b9c0;"></div>
<div class="a" style="left:633px;top:538px;width:1px;height:30px;background:#b3b9c0;"></div>
<div class="a" style="left:758px;top:538px;width:1px;height:30px;background:#b3b9c0;"></div>
<div class="a" style="left:876px;top:538px;width:1px;height:30px;background:#b3b9c0;"></div>
<div class="a" style="left:520px;top:569px;width:356px;height:27px;background:#f5b817;"></div>
<div class="t" style="left:524px;top:575.5px;font-size:13px;line-height:16px;color:#111;letter-spacing:0.95px;">IPI</div>
<div class="t" style="right:1129px;top:575.5px;font-size:13px;line-height:16px;color:#111;letter-spacing:0.95px;">24.000,00</div>
<div class="t" style="right:1004px;top:575.5px;font-size:13px;line-height:16px;color:#111;letter-spacing:0.95px;">0,00</div>
<div class="a" style="left:520px;top:596px;width:356px;height:27px;background:#eef0f2;"></div>
<div class="t" style="left:524px;top:601.5px;font-size:13px;line-height:16px;color:#333;letter-spacing:0.95px;">PIS</div>
<div class="t" style="right:1129px;top:601.5px;font-size:13px;line-height:16px;color:#333;letter-spacing:0.95px;">24.000,00</div>
<div class="t" style="right:1004px;top:601.5px;font-size:13px;line-height:16px;color:#333;letter-spacing:0.95px;">0,00</div>
<div class="a" style="left:520px;top:623px;width:356px;height:26px;background:#ffffff;"></div>
<div class="t" style="left:524px;top:628.5px;font-size:13px;line-height:16px;color:#333;letter-spacing:0.95px;">COFINS</div>
<div class="t" style="right:1129px;top:628.5px;font-size:13px;line-height:16px;color:#333;letter-spacing:0.95px;">24.000,00</div>
<div class="t" style="right:1004px;top:628.5px;font-size:13px;line-height:16px;color:#333;letter-spacing:0.95px;">0,00</div>
<div class="a" style="left:520px;top:649px;width:356px;height:27px;background:#eef0f2;"></div>
<div class="t" style="left:524px;top:655.5px;font-size:13px;line-height:16px;color:#333;letter-spacing:0.95px;">ICMS</div>
<div class="t" style="right:1129px;top:655.5px;font-size:13px;line-height:16px;color:#333;letter-spacing:0.95px;">24.000,00</div>
<div class="t" style="right:1004px;top:655.5px;font-size:13px;line-height:16px;color:#333;letter-spacing:0.95px;">4.320,00</div>
<div class="a" style="left:520px;top:676px;width:356px;height:26px;background:#ffffff;"></div>
<div class="t" style="left:524px;top:682.0px;font-size:13px;line-height:16px;color:#333;letter-spacing:0.68px;">Crédito presu...</div>
<div class="t" style="right:1129px;top:682.0px;font-size:13px;line-height:16px;color:#333;letter-spacing:0.95px;">24.000,00</div>
<div class="t" style="right:1004px;top:682.0px;font-size:13px;line-height:16px;color:#333;letter-spacing:0.95px;">1.200,00</div>
<div class="a" style="left:633px;top:569px;width:1px;height:133px;background:#d6d9dc;"></div>
<div class="a" style="left:758px;top:569px;width:1px;height:133px;background:#d6d9dc;"></div>
<div class="t" style="left:524px;top:545.5px;font-size:13px;line-height:16px;color:#444;letter-spacing:0.95px;">Imposto</div>
<div class="t" style="left:642px;top:545.5px;font-size:13px;line-height:16px;color:#444;letter-spacing:0.72px;">Base de cálculo</div>
<div class="t" style="left:767px;top:545.5px;font-size:13px;line-height:16px;color:#444;letter-spacing:0.95px;">Valor</div>
<svg class="a" style="left:879px;top:575px" width="13" height="10" viewBox="0 0 13 10"><path d="M0.5 9.5 H12.5 L6.5 0.5 Z" fill="#888"/></svg>
<svg class="a" style="left:879px;top:688px" width="13" height="10" viewBox="0 0 13 10"><path d="M0.5 0.5 H12.5 L6.5 9.5 Z" fill="#888"/></svg>
<svg class="a" style="left:525px;top:707px" width="10" height="12" viewBox="0 0 10 12"><path d="M9.5 0.5 V11.5 L0.5 6 Z" fill="#888"/></svg>
<div class="a" style="left:543px;top:707px;width:304px;height:11px;background:#8a8a8a;border-radius:6px;"></div>
<svg class="a" style="left:861px;top:707px" width="10" height="12" viewBox="0 0 10 12"><path d="M0.5 0.5 V11.5 L9.5 6 Z" fill="#888"/></svg>
<div class="a" style="left:909px;top:546px;width:480px;height:50px;border:1px solid #d8dbde;box-sizing:border-box;"></div>
<div class="a" style="left:914px;top:545px;width:63px;height:3px;background:#f6f7f7;"></div>
<div class="t" style="left:918.5px;top:537.2px;font-size:16px;line-height:20px;color:#444;letter-spacing:0.60px;">IBS UF</div>
<div class="t" style="left:922.5px;top:566.1px;font-size:13px;line-height:16px;color:#222;letter-spacing:0.68px;">Base de cálculo</div>
<div class="a" style="left:1032px;top:562px;width:135px;height:24px;background:#fff;border:1px solid #a0a0a0;box-sizing:border-box;"></div>
<div class="t" style="right:712px;top:566.5px;font-size:13px;line-height:16px;color:#7a7a7a;letter-spacing:0.95px;">19.680,00</div>
<div class="t" style="left:1192px;top:566.1px;font-size:13px;line-height:16px;color:#222;letter-spacing:0.95px;">Valor</div>
<div class="a" style="left:1232px;top:562px;width:136px;height:24px;background:#fff;border:1px solid #a0a0a0;box-sizing:border-box;"></div>
<div class="t" style="right:511px;top:566.5px;font-size:13px;line-height:16px;color:#7a7a7a;letter-spacing:0.95px;">19,68</div>
<div class="a" style="left:909px;top:605px;width:480px;height:50px;border:1px solid #d8dbde;box-sizing:border-box;"></div>
<div class="a" style="left:914px;top:604px;width:40px;height:3px;background:#f6f7f7;"></div>
<div class="t" style="left:918.5px;top:596.4px;font-size:16px;line-height:20px;color:#444;letter-spacing:0.60px;">CBS</div>
<div class="t" style="left:922.5px;top:625.2px;font-size:13px;line-height:16px;color:#222;letter-spacing:0.68px;">Base de cálculo</div>
<div class="a" style="left:1032px;top:621px;width:135px;height:25px;background:#fff;border:1px solid #a0a0a0;box-sizing:border-box;"></div>
<div class="t" style="right:712px;top:626.0px;font-size:13px;line-height:16px;color:#7a7a7a;letter-spacing:0.95px;">19.680,00</div>
<div class="t" style="left:1192px;top:625.2px;font-size:13px;line-height:16px;color:#222;letter-spacing:0.95px;">Valor</div>
<div class="a" style="left:1232px;top:621px;width:136px;height:25px;background:#fff;border:1px solid #a0a0a0;box-sizing:border-box;"></div>
<div class="t" style="right:511px;top:626.0px;font-size:13px;line-height:16px;color:#7a7a7a;letter-spacing:0.95px;">177,12</div>
<svg class="a" style="left:17px;top:771.5px" width="6" height="10" viewBox="0 0 6 10"><path d="M0.5 0.5 L5.5 5 L0.5 9.5 Z" fill="#222"/></svg>
<div class="t" style="left:30px;top:769.5px;font-size:13px;line-height:16px;color:#444;letter-spacing:0.95px;">Endereço de entrega/local de prestação do serviço (se diferente do endereço sede)</div>
<svg class="a" style="left:592px;top:766px" width="21" height="21" viewBox="0 0 21 21"><defs><radialGradient id="hg592766" cx="40%" cy="30%" r="70%"><stop offset="0" stop-color="#6aa7ee"/><stop offset="1" stop-color="#1d5fc1"/></radialGradient></defs><circle cx="10.5" cy="10.5" r="10" fill="url(#hg592766)" stroke="#1a4fa0" stroke-width="0.8"/><text x="10.5" y="16" text-anchor="middle" font-family="Liberation Sans" font-weight="bold" font-size="15" fill="#fff">?</text></svg>
<svg class="a" style="left:17px;top:795px" width="6" height="10" viewBox="0 0 6 10"><path d="M0.5 0.5 L5.5 5 L0.5 9.5 Z" fill="#222"/></svg>
<div class="t" style="left:30px;top:792.5px;font-size:13px;line-height:16px;color:#444;letter-spacing:0.95px;">Local de retirada (se diferente do endereço sede)</div>
<div class="t" style="left:10px;top:814.2px;font-size:16px;line-height:20px;color:#4a4a4a;letter-spacing:0.65px;">Cobrança</div>
<div class="a" style="left:87px;top:823px;width:1783px;height:1px;background:#d5d8db;"></div>
<div class="t" style="left:14px;top:838.9px;font-size:13px;line-height:16px;color:#222;letter-spacing:0.95px;">Forma de</div>
<div class="t" style="left:14px;top:854.1px;font-size:13px;line-height:16px;color:#222;letter-spacing:0.95px;">pagamento</div>
<div class="a" style="left:120px;top:840px;width:78px;height:25px;background:#fff;border:1px solid #767676;border-radius:2px;box-sizing:border-box;"></div>
<div class="t" style="left:126px;top:845.3px;font-size:13px;line-height:16px;color:#222;letter-spacing:0.95px;width:56px;overflow:hidden;">A prazo</div>
<div class="a" style="left:181px;top:848.5px;width:12px;height:8px"><svg width="12" height="8" viewBox="0 0 12 8" style="display:block"><path d="M1.5 1.5 L6 6 L10.5 1.5" fill="none" stroke="#111" stroke-width="2"/></svg></div>
<div class="a" style="left:201px;top:840px;width:188px;height:25px;background:#fff;border:1px solid #767676;border-radius:2px;box-sizing:border-box;"></div>
<div class="t" style="left:206px;top:845.3px;font-size:13px;line-height:16px;color:#222;letter-spacing:0.95px;width:167px;overflow:hidden;">Cartão de crédito</div>
<div class="a" style="left:372px;top:848.5px;width:12px;height:8px"><svg width="12" height="8" viewBox="0 0 12 8" style="display:block"><path d="M1.5 1.5 L6 6 L10.5 1.5" fill="none" stroke="#111" stroke-width="2"/></svg></div>
<div class="a" style="left:392px;top:840px;width:250px;height:25px;background:#fff;border:1px solid #767676;border-radius:2px;box-sizing:border-box;"></div>
<div class="a" style="left:625px;top:848.5px;width:12px;height:8px"><svg width="12" height="8" viewBox="0 0 12 8" style="display:block"><path d="M1.5 1.5 L6 6 L10.5 1.5" fill="none" stroke="#111" stroke-width="2"/></svg></div>
<div class="t" style="left:14px;top:875.8px;font-size:13px;line-height:16px;color:#222;letter-spacing:0.70px;">Condição de</div>
<div class="t" style="left:14px;top:891.5px;font-size:13px;line-height:16px;color:#222;letter-spacing:0.95px;">pagamento</div>
<div class="a" style="left:120px;top:878px;width:229px;height:24px;background:#fff;border:1px solid #a0a0a0;box-sizing:border-box;"></div>
<div class="t" style="left:122.5px;top:882.5px;font-size:13px;line-height:16px;color:#222;letter-spacing:0.95px;">30 60</div>
<svg class="a" style="left:367px;top:875px" width="21" height="21" viewBox="0 0 21 21"><defs><radialGradient id="hg367875" cx="40%" cy="30%" r="70%"><stop offset="0" stop-color="#6aa7ee"/><stop offset="1" stop-color="#1d5fc1"/></radialGradient></defs><circle cx="10.5" cy="10.5" r="10" fill="url(#hg367875)" stroke="#1a4fa0" stroke-width="0.8"/><text x="10.5" y="16" text-anchor="middle" font-family="Liberation Sans" font-weight="bold" font-size="15" fill="#fff">?</text></svg>
<div class="a" style="left:672px;top:833px;width:877px;height:71px;background:#fff;border:1px solid #a9b0b8;border-bottom:none;box-sizing:border-box;"></div>
<div class="a" style="left:673px;top:834px;width:875px;height:30px;background:linear-gradient(#eef0f2,#d6d9dd);"></div>
<div class="a" style="left:673px;top:864px;width:875px;height:1px;background:#b3b9c0;"></div>
<div class="a" style="left:721px;top:834px;width:1px;height:30px;background:#b3b9c0;"></div>
<div class="a" style="left:821px;top:834px;width:1px;height:30px;background:#b3b9c0;"></div>
<div class="a" style="left:946px;top:834px;width:1px;height:30px;background:#b3b9c0;"></div>
<div class="a" style="left:1071px;top:834px;width:1px;height:30px;background:#b3b9c0;"></div>
<div class="a" style="left:1197px;top:834px;width:1px;height:30px;background:#b3b9c0;"></div>
<div class="a" style="left:1321px;top:834px;width:1px;height:30px;background:#b3b9c0;"></div>
<div class="a" style="left:1409px;top:834px;width:1px;height:30px;background:#b3b9c0;"></div>
<div class="a" style="left:1529px;top:834px;width:1px;height:30px;background:#b3b9c0;"></div>
<div class="a" style="left:677px;top:838px;width:38px;height:22px;background:#7fba00;border-radius:3px;"></div>
<div class="t" style="left:679px;top:840.5px;font-size:13px;line-height:16px;color:#fff;letter-spacing:0.90px;font-weight:bold;">Novo</div>
<div class="t" style="left:729.5px;top:841.5px;font-size:13px;line-height:16px;color:#444;letter-spacing:0.95px;">Prazo (dias)</div>
<div class="t" style="left:829.5px;top:841.5px;font-size:13px;line-height:16px;color:#444;letter-spacing:0.95px;">Vencimento</div>
<div class="t" style="left:954.5px;top:841.5px;font-size:13px;line-height:16px;color:#444;letter-spacing:0.95px;">Valor</div>
<div class="t" style="left:1079.5px;top:841.5px;font-size:13px;line-height:16px;color:#444;letter-spacing:0.95px;">Valor retido</div>
<div class="t" style="left:1204.5px;top:841.5px;font-size:13px;line-height:16px;color:#444;letter-spacing:0.95px;">Valor líquido</div>
<div class="t" style="left:1330px;top:841.5px;font-size:13px;line-height:16px;color:#444;letter-spacing:0.95px;">Bloqueado</div>
<div class="t" style="left:1417px;top:841.5px;font-size:13px;line-height:16px;color:#444;letter-spacing:0.95px;">Adiantado?</div>
<div class="a" style="left:673px;top:865px;width:829px;height:27px;background:#f5b817;"></div>
<div class="a" style="left:673px;top:892px;width:829px;height:12px;background:#eef0f2;"></div>
<div class="a" style="left:721px;top:865px;width:1px;height:39px;background:#ddd6c2;"></div>
<div class="a" style="left:821px;top:865px;width:1px;height:39px;background:#ddd6c2;"></div>
<div class="a" style="left:946px;top:865px;width:1px;height:39px;background:#ddd6c2;"></div>
<div class="a" style="left:1071px;top:865px;width:1px;height:39px;background:#ddd6c2;"></div>
<div class="a" style="left:1197px;top:865px;width:1px;height:39px;background:#ddd6c2;"></div>
<div class="a" style="left:1321px;top:865px;width:1px;height:39px;background:#ddd6c2;"></div>
<div class="a" style="left:1409px;top:865px;width:1px;height:39px;background:#ddd6c2;"></div>
<div class="a" style="left:721px;top:892px;width:1px;height:12px;background:#d6d9dc;"></div>
<div class="a" style="left:821px;top:892px;width:1px;height:12px;background:#d6d9dc;"></div>
<div class="a" style="left:946px;top:892px;width:1px;height:12px;background:#d6d9dc;"></div>
<div class="a" style="left:1071px;top:892px;width:1px;height:12px;background:#d6d9dc;"></div>
<div class="a" style="left:1197px;top:892px;width:1px;height:12px;background:#d6d9dc;"></div>
<div class="a" style="left:1321px;top:892px;width:1px;height:12px;background:#d6d9dc;"></div>
<div class="a" style="left:1409px;top:892px;width:1px;height:12px;background:#d6d9dc;"></div>
<svg class="a" style="left:677px;top:875px" width="9" height="9" viewBox="0 0 9 9"><path d="M1.2 1.2 L7.8 7.8 M7.8 1.2 L1.2 7.8" stroke="#d02a1a" stroke-width="2.2"/></svg>
<svg class="a" style="left:693px;top:869px" width="18" height="18" viewBox="0 0 18 18"><path d="M4.2 13.8 L15.8 2.2" stroke="#e8902a" stroke-width="4.2" stroke-linecap="butt"/><path d="M4.2 13.8 L15.8 2.2" stroke="#f7b868" stroke-width="1.4"/><path d="M1.2 16.8 L2.6 12.3 L5.7 15.4 Z" fill="#f5e3c0"/><path d="M1.2 16.8 L1.8 14.8 L3.2 16.2 Z" fill="#222"/></svg>
<svg class="a" style="left:677px;top:898px" width="9" height="9" viewBox="0 0 9 9"><path d="M1.2 1.2 L7.8 7.8 M7.8 1.2 L1.2 7.8" stroke="#d02a1a" stroke-width="2.2"/></svg>
<svg class="a" style="left:693px;top:896px" width="18" height="18" viewBox="0 0 18 18"><path d="M4.2 13.8 L15.8 2.2" stroke="#e8902a" stroke-width="4.2" stroke-linecap="butt"/><path d="M4.2 13.8 L15.8 2.2" stroke="#f7b868" stroke-width="1.4"/><path d="M1.2 16.8 L2.6 12.3 L5.7 15.4 Z" fill="#f5e3c0"/><path d="M1.2 16.8 L1.8 14.8 L3.2 16.2 Z" fill="#222"/></svg>
<div class="t" style="left:729.5px;top:870.2px;font-size:13px;line-height:16px;color:#111;letter-spacing:0.95px;">30</div>
<div class="t" style="left:829.5px;top:870.2px;font-size:13px;line-height:16px;color:#111;letter-spacing:0.95px;">14/01/2026</div>
<div class="t" style="right:816.5px;top:870.2px;font-size:13px;line-height:16px;color:#111;letter-spacing:0.95px;">12.000,00</div>
<div class="t" style="right:690.5px;top:870.2px;font-size:13px;line-height:16px;color:#111;letter-spacing:0.95px;">0,00</div>
<div class="t" style="right:565.5px;top:870.2px;font-size:13px;line-height:16px;color:#111;letter-spacing:0.95px;">12.000,00</div>
<div class="t" style="left:1330px;top:870.2px;font-size:13px;line-height:16px;color:#111;letter-spacing:0.95px;">Não</div>
<div class="t" style="left:729.5px;top:897.0px;font-size:13px;line-height:16px;color:#333;letter-spacing:0.95px;">60</div>
<div class="t" style="left:829.5px;top:897.0px;font-size:13px;line-height:16px;color:#333;letter-spacing:0.95px;">13/02/2026</div>
<div class="t" style="right:816.5px;top:897.0px;font-size:13px;line-height:16px;color:#333;letter-spacing:0.95px;">12.000,00</div>
<div class="t" style="right:690.5px;top:897.0px;font-size:13px;line-height:16px;color:#333;letter-spacing:0.95px;">0,00</div>
<div class="t" style="right:565.5px;top:897.0px;font-size:13px;line-height:16px;color:#333;letter-spacing:0.95px;">12.000,00</div>
<div class="t" style="left:1330px;top:897.0px;font-size:13px;line-height:16px;color:#333;letter-spacing:0.95px;">Não</div>
<svg class="a" style="left:1532px;top:871px" width="13" height="10" viewBox="0 0 13 10"><path d="M0.5 9.5 H12.5 L6.5 0.5 Z" fill="#888"/></svg>
<div class="a" style="left:1533px;top:902px;width:12px;height:2px;background:#999;"></div>
